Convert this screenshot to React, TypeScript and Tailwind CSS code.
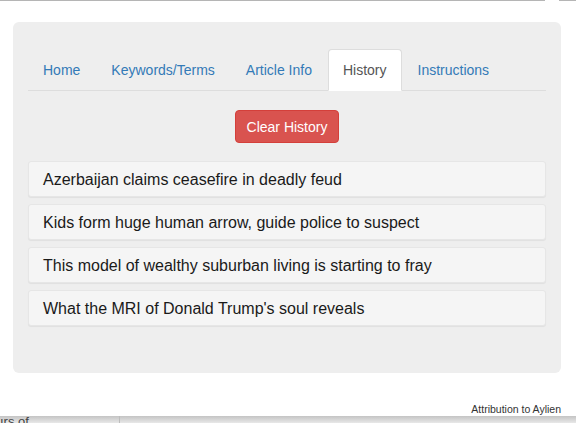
import React from "react";

const tabs = ["Home", "Keywords/Terms", "Article Info", "History", "Instructions"];

const history = [
  "Azerbaijan claims ceasefire in deadly feud",
  "Kids form huge human arrow, guide police to suspect",
  "This model of wealthy suburban living is starting to fray",
  "What the MRI of Donald Trump's soul reveals",
];

export default function App() {
  return (
    <div
      className="relative h-[423px] w-[576px] overflow-hidden bg-white text-[#333]"
      style={{ fontFamily: '"Liberation Sans", Arial, Helvetica, sans-serif' }}
    >
      {/* page behind the popup */}
      <div className="flex h-px">
        <div className="w-[545px] bg-[#b5b5b5]" />
        <div className="w-[14px]" />
        <div className="flex-1 bg-[#b5b5b5]" />
      </div>

      <div className="ml-[13px] mr-[15px] mt-[21px] rounded-[6px] bg-[#eeeeee] px-[15px] pb-[47px] pt-[27px]">
        <ul className="flex border-b border-[#dddddd] text-[14px] leading-[20px]">
          {tabs.map((t) => (
            <li key={t} className="-mb-px mr-[1px]">
              {t === "History" ? (
                <span className="block rounded-t-[4px] border border-[#dddddd] border-b-transparent bg-white px-[14px] py-[10px] text-[#555]">
                  {t}
                </span>
              ) : (
                <a className="block rounded-t-[4px] border border-transparent px-[14px] py-[10px] text-[#337ab7]">
                  {t}
                </a>
              )}
            </li>
          ))}
        </ul>

        <div className="mt-[19px] flex justify-center">
          <button className="h-[33px] rounded-[4px] border border-[#d43f3a] bg-[#d9534f] px-[11px] text-[14px] leading-[20px] text-white">
            Clear History
          </button>
        </div>

        <div className="mt-[18px] flex flex-col gap-[7px]">
          {history.map((h) => (
            <div
              key={h}
              className="flex h-[36px] items-center rounded-[3px] border border-[#e6e6e6] bg-[#f5f5f5] pl-[14px] pt-[2px] text-[16px] text-[#1a1a1a] shadow-[0_1px_1px_rgba(0,0,0,0.06)]"
            >
              {h}
            </div>
          ))}
        </div>
      </div>

      <div className="mt-[30px] pr-[15px] text-right text-[10.5px] leading-[12px] text-[#333]">
        Attribution to Aylien
      </div>

      <div className="absolute bottom-0 left-0 flex h-[7px] w-full bg-gradient-to-b from-[#c4c4c4] to-[#e8e8e8]">
        <div className="relative w-[119px] overflow-hidden">
          <span className="absolute left-0 top-[-1px] text-[13px] leading-[14px] text-[#444]">ırs of</span>
        </div>
        <div className="w-px bg-[#bdbdbd]" />
      </div>
    </div>
  );
}
